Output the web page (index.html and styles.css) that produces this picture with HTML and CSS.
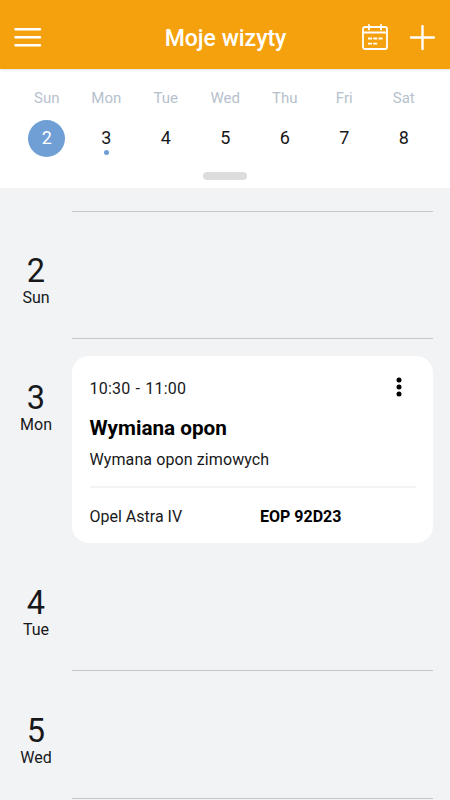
FILE: index.html
```html
<!DOCTYPE html>
<html lang="pl">
<head>
<meta charset="utf-8">
<title>Moje wizyty</title>
<link rel="stylesheet" href="styles.css">
</head>
<body>
<header class="bar">
  <svg class="menu" viewBox="0 0 28 20"><path d="M1.500 1.200h24.500M1.500 9.200h24.500M1.500 17.200h24.500"/></svg>
  <h1>Moje wizyty</h1>
  <svg class="cal" viewBox="0 0 28 28"><rect x="2" y="4" width="24" height="22" rx="2"/><path d="M2 9.500h24M8 2v4.500M20 2v4.500"/><path class="dots" d="M7 15.500h4M12.200 15.500h4M17.500 15.500h4M7 20.700h4M12.200 20.700h4"/></svg>
  <svg class="plus" viewBox="0 0 26 26"><path d="M13.500 1v23M2 12.500h23"/></svg>
</header>
<section class="week">
  <div class="days">
    <div class="day"><span>Sun</span><b class="on">2</b></div>
    <div class="day"><span>Mon</span><b class="event">3</b></div>
    <div class="day"><span>Tue</span><b>4</b></div>
    <div class="day"><span>Wed</span><b>5</b></div>
    <div class="day"><span>Thu</span><b>6</b></div>
    <div class="day"><span>Fri</span><b>7</b></div>
    <div class="day"><span>Sat</span><b>8</b></div>
  </div>
  <div class="handle"></div>
</section>
<main>
  <section class="row first"><div class="date"><strong>2</strong><span>Sun</span></div><div class="slot"></div></section>
  <section class="row busy"><div class="date"><strong>3</strong><span>Mon</span></div>
    <article class="card">
      <div class="top"><time>10:30 - 11:00</time><svg class="more" viewBox="0 0 6 20"><circle cx="3" cy="3" r="2.500"/><circle cx="3" cy="10" r="2.500"/><circle cx="3" cy="17" r="2.500"/></svg></div>
      <h2>Wymiana opon</h2>
      <p>Wymana opon zimowych</p>
      <div class="car"><span>Opel Astra IV</span><b>EOP 92D23</b></div>
    </article>
  </section>
  <section class="row"><div class="date"><strong>4</strong><span>Tue</span></div><div class="slot"></div></section>
  <section class="row"><div class="date"><strong>5</strong><span>Wed</span></div><div class="slot"></div></section>
</main>
</body>
</html>
```
FILE: styles.css
```css
* { box-sizing: border-box; }
body { margin: 0; height: 800px; overflow: hidden; background: #f2f3f5; color: #17181a; font-family: Roboto, sans-serif; font-size: 16px; }
h1, h2, p { margin: 0; }
.bar { position: relative; height: 69px; padding: 6px 15px 0 14px; background: #f5a10d; box-shadow: 0 1px 3px rgba(0, 0, 0, .12); display: grid; grid-template-columns: 76px 1fr 28px 26px; column-gap: 20px; align-items: center; color: #fff; }
.bar h1 { font-size: 23px; line-height: 28px; font-weight: 500; text-align: center; padding-top: 2px; }
.bar svg { fill: none; stroke: #fff; stroke-width: 2.4; stroke-linecap: round; }
.menu { width: 28px; height: 20px; overflow: visible; }
.cal { width: 28px; height: 28px; }
.bar .cal { stroke-width: 1.8; margin-top: -2px; }
.bar .cal .dots { stroke-linecap: butt; }
.plus { width: 26px; height: 26px; }
.week { height: 119px; padding: 19px 16px 0; background: #fff; }
.days { display: grid; grid-template-columns: repeat(7, 59.5px); margin-left: 1px; }
.day { display: flex; flex-direction: column; align-items: center; }
.day span { font-size: 15px; line-height: 20px; color: #b6c1cd; }
.day b { position: relative; width: 37px; height: 37px; margin-top: 12px; border-radius: 50%; text-align: center; font-size: 18px; line-height: 36px; font-weight: 400; }
.day .on { background: #6f9fd4; color: #fff; }
.event::after { content: ""; position: absolute; left: 16px; top: 30px; width: 5px; height: 5px; border-radius: 50%; background: #6f9fd4; }
.handle { width: 44px; height: 8px; margin: 15px auto 0; border-radius: 4px; background: #ddd; }
main { padding-top: 23px; }
.row { display: grid; grid-template-columns: 72px 361px; height: 128px; }
.date { text-align: center; padding-top: 42px; }
.date strong { display: block; font-size: 32.5px; line-height: 36px; font-weight: 400; }
.date span { display: block; font-size: 16px; line-height: 18px; }
.slot { border-bottom: 1px solid #c4c6c9; }
.first .slot { border-top: 1px solid #c4c6c9; }
.busy { height: 204px; padding-top: 17px; }
.busy .date { padding-top: 24px; }
.card { height: 187px; border-radius: 17px; background: #fff; padding: 22px 17px 0 17.5px; }
.top { display: flex; justify-content: space-between; line-height: 22px; height: 20px; }
.top time { letter-spacing: .2px; word-spacing: 1px; }
.more { width: 6px; height: 20px; margin-right: 14.5px; margin-top: -1px; }
.card h2 { font-size: 20.7px; line-height: 24px; font-weight: 700; margin-top: 18px; color: #000; }
.card p { line-height: 20px; margin-top: 10px; letter-spacing: .1px; }
.car { display: grid; grid-template-columns: 170.5px 1fr; border-top: 2px solid #f2f3f5; margin-top: 16px; padding-top: 19px; line-height: 20px; }
.car b { color: #000; }
```
